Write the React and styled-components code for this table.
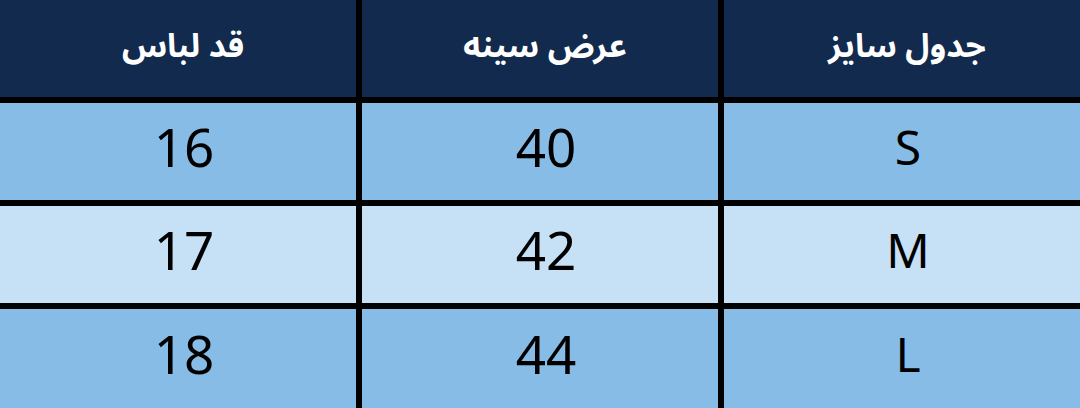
import React from "react";
import styled, { createGlobalStyle } from "styled-components";

const GlobalStyle = createGlobalStyle`
  html, body {
    margin: 0;
    padding: 0;
    background: #000;
  }
  body {
    font-family: "Noto Sans", "Open Sans", sans-serif;
  }
`;

const Table = styled.div`
  direction: rtl;
  width: 1080px;
  height: 408px;
  display: grid;
  grid-template-columns: repeat(3, 1fr);
  grid-template-rows: 97px 97px 97px 1fr;
  gap: 6px;
  background: #000;
`;

const HeadCell = styled.div`
  display: flex;
  align-items: center;
  justify-content: center;
  padding-left: 10px;
  padding-bottom: 4px;
  background: #112a4e;
  color: #fff;
  font-family: "Noto Sans Arabic", "DejaVu Sans", "Noto Sans", sans-serif;
  font-weight: 700;
  font-size: 33px;
`;

const Cell = styled.div`
  display: flex;
  align-items: center;
  justify-content: center;
  padding-left: 12px;
  padding-bottom: 10px;
  background: ${({ light }) => (light ? "#c6e1f6" : "#86bce6")};
  color: #000;
  font-family: "Noto Sans", "Open Sans", sans-serif;
  font-size: ${({ size }) => size}px;
  line-height: 1;
`;

const headers = ["جدول سایز", "عرض سینه", "قد لباس"];

const rows = [
  ["S", "40", "16"],
  ["M", "42", "17"],
  ["L", "44", "18"],
];

const App = () => {
  return (
    <>
      <GlobalStyle />
      <Table>
        {headers.map((h) => (
          <HeadCell key={h}>{h}</HeadCell>
        ))}
        {rows.map((row, i) =>
          row.map((value, j) => (
            <Cell key={`${i}-${j}`} light={i === 1} size={j === 0 ? 48 : 53}>
              {value}
            </Cell>
          ))
        )}
      </Table>
    </>
  );
};

export default App;
